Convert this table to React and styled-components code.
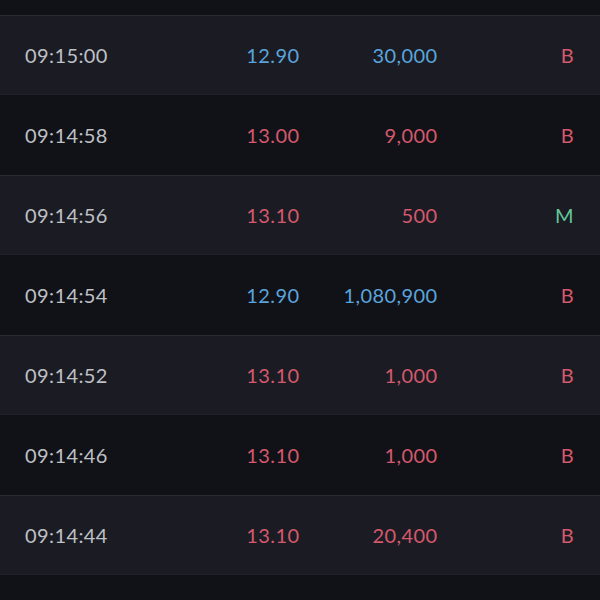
import React from 'react';
import styled, { createGlobalStyle } from 'styled-components';

const GlobalStyle = createGlobalStyle`
  html, body {
    margin: 0;
    padding: 0;
    background: #111217;
  }
  body {
    font-family: Lato, "Noto Sans", "Liberation Sans", sans-serif;
  }
`;

const Screen = styled.div`
  width: 600px;
  height: 600px;
  overflow: hidden;
  background: #111217;
  display: flex;
  flex-direction: column;
`;

const Spacer = styled.div`
  height: 15px;
  flex-shrink: 0;
  background: #111217;
`;

const Row = styled.div`
  display: grid;
  grid-template-columns: 150px 124px 138px 1fr;
  align-items: center;
  height: 80px;
  flex-shrink: 0;
  box-sizing: border-box;
  padding: 0 25px;
  font-size: 20px;
  letter-spacing: 0.4px;
  background: ${props => (props.shaded ? '#1b1c23' : '#111217')};
  border-top: 1px solid ${props => (props.shaded ? '#2a2b32' : '#111217')};
  border-bottom: 1px solid ${props => (props.shaded ? '#202128' : '#111217')};
`;

const Time = styled.span`
  color: #bfc0c6;
`;

const Num = styled.span`
  text-align: right;
  margin-right: -0.4px;
  color: ${props => props.color};
`;

const Flag = styled.span`
  text-align: right;
  padding-right: 1px;
  color: ${props => props.color};
`;

const BLUE = '#5aa4dc';
const RED = '#d6586d';
const GREEN = '#63c69c';

const trades = [
  { time: '09:15:00', price: '12.90', vol: '30,000', up: false, flag: 'B' },
  { time: '09:14:58', price: '13.00', vol: '9,000', up: true, flag: 'B' },
  { time: '09:14:56', price: '13.10', vol: '500', up: true, flag: 'M' },
  { time: '09:14:54', price: '12.90', vol: '1,080,900', up: false, flag: 'B' },
  { time: '09:14:52', price: '13.10', vol: '1,000', up: true, flag: 'B' },
  { time: '09:14:46', price: '13.10', vol: '1,000', up: true, flag: 'B' },
  { time: '09:14:44', price: '13.10', vol: '20,400', up: true, flag: 'B' },
  { time: '', price: '', vol: '', up: true, flag: '' },
];

const App = () => (
  <Screen>
    <GlobalStyle />
    <Spacer />
    {trades.map((t, i) => {
      const c = t.up ? RED : BLUE;
      return (
        <Row key={i} shaded={i % 2 === 0}>
          <Time>{t.time}</Time>
          <Num color={c}>{t.price}</Num>
          <Num color={c}>{t.vol}</Num>
          <Flag color={t.flag === 'M' ? GREEN : RED}>{t.flag}</Flag>
        </Row>
      );
    })}
  </Screen>
);

export default App;
